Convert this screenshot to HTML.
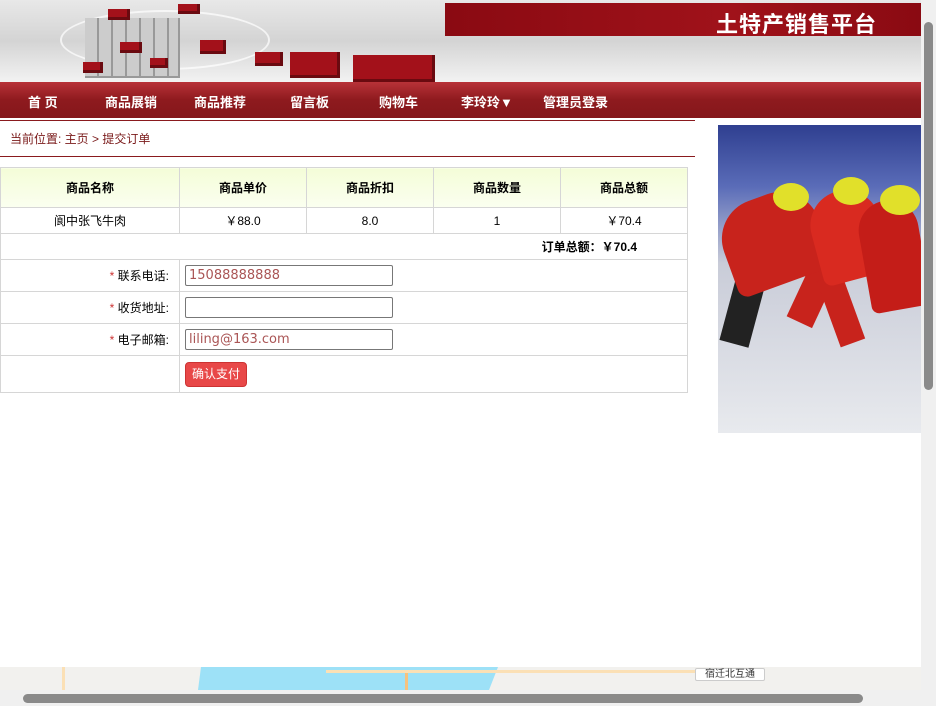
<!DOCTYPE html>
<html><head><meta charset="utf-8"><style>
*{margin:0;padding:0;box-sizing:border-box}
body{width:936px;height:706px;overflow:hidden;position:relative;background:#fff;font-family:"Liberation Sans","Noto Sans CJK SC",sans-serif;font-size:12px;color:#000}
.hdr{position:absolute;left:0;top:0;width:921px;height:82px;background:linear-gradient(180deg,#e8e8e8,#d4d4d4 50%,#f2f2f2);overflow:hidden}
.cube{position:absolute;background:#a3111a;box-shadow:inset -3px -3px 0 #6a0a10}
.gc{position:absolute;background:#bdbdbd;box-shadow:inset -2px -2px 0 #999}
.banner{position:absolute;left:445px;top:3px;width:476px;height:33px;background:linear-gradient(90deg,#8a0a12,#a0121a 60%,#8a0a12)}
.banner span{position:absolute;right:44px;top:4px;color:#fff;font-size:22px;font-weight:bold;letter-spacing:1px}
.nav{position:absolute;left:0;top:82px;width:921px;height:36px;background:linear-gradient(180deg,#b83238,#8e1a1e 50%,#85171b)}
.nav span{position:absolute;top:10px;color:#fff;font-weight:bold;font-size:13px}
.line{position:absolute;left:0;width:695px;height:1px;background:#8a1a1e}
.bc{position:absolute;left:10px;top:130px;color:#7a1a1a;font-size:12px}
.skate{position:absolute;left:718px;top:125px;width:203px;height:308px;background:linear-gradient(180deg,#2f3f90 0%,#5a6cb8 20%,#c9ccd8 45%,#e8eaee 100%);overflow:hidden}
table{position:absolute;left:0;top:167px;width:688px;border-collapse:collapse}
td{border:1px solid #d6d6d6;text-align:center}
.th td{height:40px;background:linear-gradient(180deg,#f4fdd8,#fbfff0);font-weight:bold}
.r td{height:26px}
.f td{height:32px}
.lab{text-align:right;padding-right:10px}
.lab b{color:#c33;font-weight:normal}
input{width:208px;height:21px;border:1px solid #777;border-radius:2px;font-size:13px;color:#a55;padding-left:3px;font-family:"DejaVu Sans",sans-serif;display:block;margin-left:5px}
.btn{display:block;margin-left:5px;width:62px;height:25px;background:#e84848;border:1px solid #c33;border-radius:4px;color:#fff;line-height:23px;text-align:center;font-size:12px}
.map{position:absolute;left:0;top:667px;width:921px;height:23px;background:#f2f1ee;overflow:hidden}
.vs{position:absolute;left:921px;top:0;width:15px;height:706px;background:#f0f0f0}
.hs{position:absolute;left:0;top:690px;width:921px;height:16px;background:#f0f0f0}
</style></head><body>
<div class="hdr">
<div style="position:absolute;left:60px;top:10px;width:210px;height:60px;border:2px solid #fff;border-radius:50%;opacity:.7"></div>
<div class="gc" style="left:85px;top:18px;width:95px;height:60px;background:repeating-linear-gradient(90deg,#ccc 0 12px,#999 12px 14px)"></div>
<div class="cube" style="left:108px;top:9px;width:22px;height:11px"></div>
<div class="cube" style="left:178px;top:4px;width:22px;height:10px"></div>
<div class="cube" style="left:120px;top:42px;width:22px;height:11px"></div>
<div class="cube" style="left:200px;top:40px;width:26px;height:14px"></div>
<div class="cube" style="left:83px;top:62px;width:20px;height:11px"></div>
<div class="cube" style="left:150px;top:58px;width:18px;height:10px"></div>
<div class="cube" style="left:255px;top:52px;width:28px;height:14px"></div>
<div class="cube" style="left:290px;top:52px;width:50px;height:26px"></div>
<div class="cube" style="left:353px;top:55px;width:82px;height:27px"></div>
<div class="banner"><span>土特产销售平台</span></div>
</div>
<div class="nav">
<span style="left:28px">首 页</span><span style="left:105px">商品展销</span><span style="left:194px">商品推荐</span><span style="left:290px">留言板</span><span style="left:379px">购物车</span><span style="left:461px">李玲玲▼</span><span style="left:543px">管理员登录</span>
</div>
<div class="line" style="top:120px"></div>
<div class="bc">当前位置: 主页 &gt; 提交订单</div>
<div class="line" style="top:156px"></div>
<div class="skate">
<div style="position:absolute;left:10px;top:150px;width:30px;height:70px;background:#222;transform:rotate(15deg)"></div>
<div style="position:absolute;left:80px;top:140px;width:28px;height:60px;background:#c8231c;transform:rotate(25deg)"></div>
<div style="position:absolute;left:110px;top:150px;width:26px;height:70px;background:#c8231c;transform:rotate(-20deg)"></div>
<div style="position:absolute;left:5px;top:70px;width:100px;height:90px;background:#c8231c;border-radius:40px 40px 10px 10px;transform:rotate(-20deg)"></div>
<div style="position:absolute;left:95px;top:65px;width:70px;height:90px;background:#d92a20;border-radius:40px 40px 10px 10px;transform:rotate(-15deg)"></div>
<div style="position:absolute;left:145px;top:75px;width:60px;height:110px;background:#c41d18;border-radius:40px 40px 10px 10px;transform:rotate(-10deg)"></div>
<div style="position:absolute;left:55px;top:58px;width:36px;height:28px;background:#e1e02a;border-radius:50%"></div>
<div style="position:absolute;left:115px;top:52px;width:36px;height:28px;background:#e1e02a;border-radius:50%"></div>
<div style="position:absolute;left:162px;top:60px;width:40px;height:30px;background:#e1e02a;border-radius:50%"></div>
</div>
<table>
<tr class="th"><td style="width:179px">商品名称</td><td style="width:127px">商品单价</td><td style="width:127px">商品折扣</td><td style="width:127px">商品数量</td><td>商品总额</td></tr>
<tr class="r"><td>阆中张飞牛肉</td><td>￥88.0</td><td>8.0</td><td>1</td><td>￥70.4</td></tr>
<tr class="r"><td colspan="5" style="text-align:right;padding-right:50px;font-weight:bold">订单总额：￥70.4</td></tr>
<tr class="f"><td class="lab"><b>*</b> 联系电话:</td><td colspan="4" style="text-align:left"><input value="15088888888"></td></tr>
<tr class="f"><td class="lab"><b>*</b> 收货地址:</td><td colspan="4" style="text-align:left"><input value=""></td></tr>
<tr class="f"><td class="lab"><b>*</b> 电子邮箱:</td><td colspan="4" style="text-align:left"><input value="liling@163.com"></td></tr>
<tr><td style="height:37px"></td><td colspan="4" style="text-align:left"><span class="btn">确认支付</span></td></tr>
</table>
<div class="map">
<div style="position:absolute;left:198px;top:0;width:300px;height:23px;background:#9de1f7;clip-path:polygon(1% 0,100% 0,97% 100%,0 100%)"></div>
<div style="position:absolute;left:326px;top:3px;width:370px;height:3px;background:#fbe0b5"></div>
<div style="position:absolute;left:62px;top:0;width:3px;height:23px;background:#fbe0b5"></div>
<div style="position:absolute;left:405px;top:6px;width:3px;height:17px;background:#f6c27e"></div>
<div style="position:absolute;left:695px;top:1px;width:70px;height:13px;background:#fff;border:1px solid #ccc;border-radius:2px;font-size:10px;line-height:11px;text-align:center;color:#333">宿迁北互通</div>
</div>
<div class="vs"><div style="position:absolute;left:3px;top:22px;width:9px;height:368px;background:#8a8a8a;border-radius:5px"></div></div>
<div class="hs"><div style="position:absolute;left:23px;top:4px;width:840px;height:9px;background:#8a8a8a;border-radius:5px"></div></div>
</body></html>
